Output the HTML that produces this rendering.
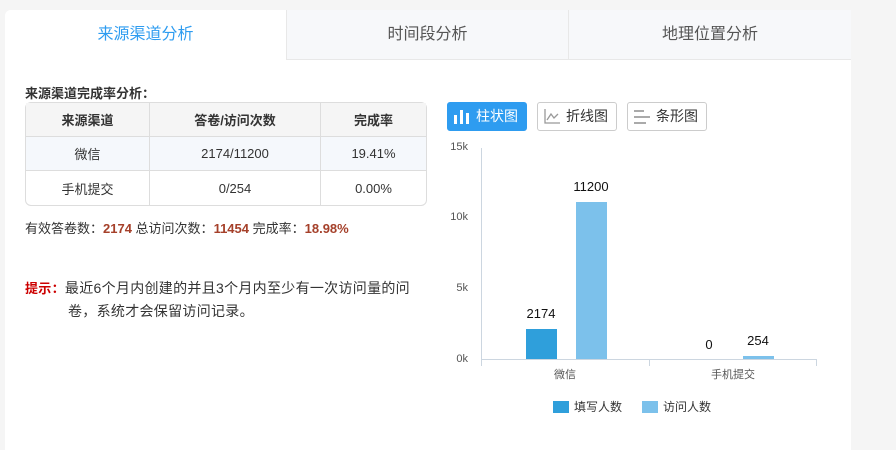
<!DOCTYPE html><html><head><meta charset="utf-8"><style>
*{margin:0;padding:0;box-sizing:border-box}
body{width:896px;height:439px;background:#f5f5f5;font-family:"Liberation Sans","Noto Sans CJK SC",sans-serif;position:relative;overflow:hidden;font-size:13px;color:#333}
.panel{position:absolute;left:5px;top:10px;width:846px;height:440px;background:#fff;border-radius:6px 6px 0 0}
.tab{position:absolute;top:10px;height:50px;line-height:50px;text-align:center;font-size:16px;color:#555;background:#f7f8fa;border-bottom:1px solid #e8e8e8}
.a{position:absolute}
table{border-collapse:separate;border-spacing:0;border:1px solid #ddd;border-radius:6px;position:absolute;left:25px;top:102px;width:402px;font-size:13px}
td{text-align:center;border-right:1px solid #ddd;border-bottom:1px solid #ddd;height:34px}
td:last-child{border-right:none}
tr:last-child td{border-bottom:none}
.btn{position:absolute;top:102px;height:29px;width:80px;border:1px solid #ccc;border-radius:3px;font-size:14px;line-height:27px;padding-left:28px;color:#333}
.r{color:#a5402a;font-weight:bold}
.yl{position:absolute;font-size:11px;color:#555;right:calc(896px - 468px)}
</style></head><body>
<div class="panel"></div>
<div class="tab" style="left:5px;width:281px;background:#fff;color:#2e9cf0;border-bottom:none;border-radius:6px 0 0 0">来源渠道分析</div>
<div class="tab" style="left:286px;width:282px;border-left:1px solid #e8e8e8">时间段分析</div>
<div class="tab" style="left:568px;width:283px;border-left:1px solid #e8e8e8">地理位置分析</div>
<div class="a" style="left:25px;top:83px;font-weight:bold;font-size:13px">来源渠道完成率分析：</div>
<table>
<tr style="background:#f5f5f5;font-weight:bold"><td style="width:124px">来源渠道</td><td style="width:171px">答卷/访问次数</td><td>完成率</td></tr>
<tr style="background:#f5f8fc"><td>微信</td><td>2174/11200</td><td>19.41%</td></tr>
<tr><td>手机提交</td><td>0/254</td><td>0.00%</td></tr>
</table>
<div class="a" style="left:25px;top:218px">有效答卷数：<span class="r">2174</span> 总访问次数：<span class="r">11454</span> 完成率：<span class="r">18.98%</span></div>
<div class="a" style="left:25px;top:277px;width:420px;line-height:22px;font-size:14px;letter-spacing:0.3px"><span style="color:#c00;font-weight:bold;font-size:13px">提示：</span>最近6个月内创建的并且3个月内至少有一次访问量的问<br><span style="padding-left:43px">卷，系统才会保留访问记录。</span></div>
<div class="btn" style="left:447px;background:#2e9cf0;border-color:#2e9cf0;color:#fff">柱状图
<svg class="a" style="left:6px;top:7px" width="16" height="14"><rect x="0" y="5" width="3" height="9" fill="#fff"/><rect x="6" y="0" width="3" height="14" fill="#fff"/><rect x="12" y="3" width="3" height="11" fill="#fff"/></svg></div>
<div class="btn" style="left:537px">折线图
<svg class="a" style="left:6px;top:6px" width="16" height="15"><path d="M1 0V14H16M3 11L7 5L10 9L14 5" stroke="#999" fill="none" stroke-width="1.3"/></svg></div>
<div class="btn" style="left:627px">条形图
<svg class="a" style="left:6px;top:7px" width="16" height="14"><rect x="0" y="0" width="10" height="2" fill="#aaa"/><rect x="0" y="6" width="16" height="2" fill="#aaa"/><rect x="0" y="12" width="12" height="2" fill="#aaa"/></svg></div>
<div class="yl" style="top:141px">15k</div>
<div class="yl" style="top:211px">10k</div>
<div class="yl" style="top:282px">5k</div>
<div class="yl" style="top:353px">0k</div>
<svg class="a" style="left:0;top:0" width="896" height="439">
<line x1="481.5" y1="148" x2="481.5" y2="366" stroke="#ccd6e0"/>
<line x1="481" y1="359.5" x2="817" y2="359.5" stroke="#ccd6e0"/>
<line x1="649.5" y1="359" x2="649.5" y2="366" stroke="#ccd6e0"/>
<line x1="816.5" y1="359" x2="816.5" y2="366" stroke="#ccd6e0"/>
<rect x="526" y="329" width="31" height="30" fill="#2f9fdb"/>
<rect x="576" y="202" width="31" height="157" fill="#7cc1eb"/>
<rect x="743" y="356" width="31" height="3" fill="#7cc1eb"/>
<g font-size="13" fill="#111" text-anchor="middle" font-family="Liberation Sans">
<text x="541" y="318">2174</text><text x="591" y="191">11200</text><text x="709" y="349">0</text><text x="758" y="345">254</text></g>
<g font-size="11" fill="#555" text-anchor="middle" font-family="Liberation Sans,Noto Sans CJK SC"><text x="565" y="378">微信</text><text x="733" y="378">手机提交</text></g>
<rect x="553" y="401" width="16" height="12" fill="#2f9fdb"/><rect x="642" y="401" width="16" height="12" fill="#7cc1eb"/>
<g font-size="12" fill="#333" font-family="Liberation Sans,Noto Sans CJK SC"><text x="574" y="411">填写人数</text><text x="663" y="411">访问人数</text></g>
</svg>
</body></html>
